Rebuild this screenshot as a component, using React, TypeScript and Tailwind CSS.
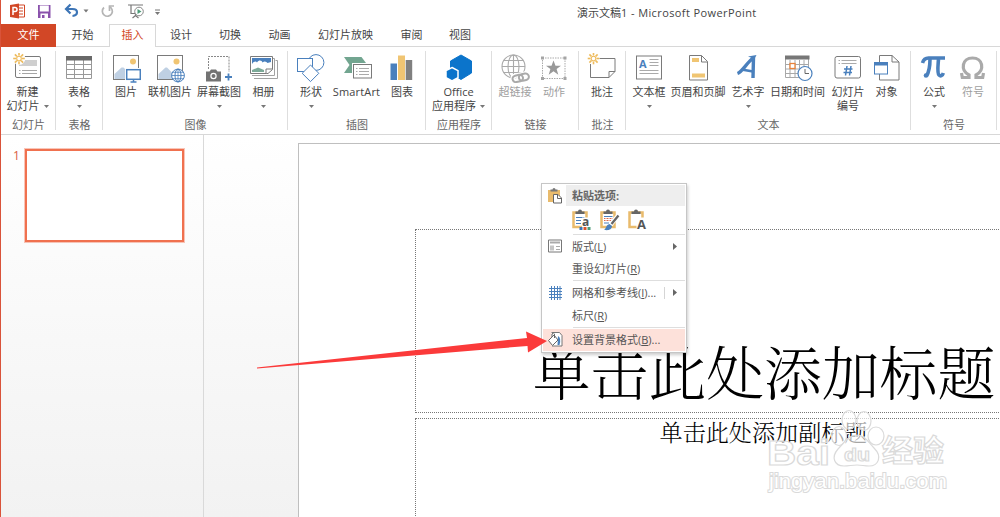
import type { ReactNode } from 'react'

const GRAY = '#7a7a7a'
const BLUE = '#4a80bd'
const YELLOW = '#f0c573'

const Sun = ({ x, y }: { x: number; y: number }) => (
  <g transform={`translate(${x} ${y})`} stroke="#eebb5c" strokeWidth="1.6" fill="#fff">
    {[0, 45, 90, 135, 180, 225, 270, 315].map((a) => (
      <path key={a} d="M0 -3v-2.8" transform={`rotate(${a})`} />
    ))}
    <circle r="2.3" strokeWidth="1.1" />
  </g>
)

const Icon = ({ children }: { children: ReactNode }) => (
  <svg width="30" height="30" viewBox="0 0 30 30" fill="none" className="block shrink-0">
    {children}
  </svg>
)

const NewSlideIcon = () => (
  <Icon>
    <rect x="2.5" y="3.5" width="25" height="21" rx="1.5" stroke={GRAY} />
    <rect x="6" y="7" width="18" height="6" fill="#cfcfcf" />
    <path d="M6 17.5h1.5M9 17.5h15M6 20.5h1.5M9 20.5h15" stroke="#a5a5a5" />
    <circle cx="6" cy="5.5" r="6.3" fill="#fff" />
    <Sun x={6} y={5.5} />
  </Icon>
)

const TableIcon = () => (
  <Icon>
    <path d="M2.5 3.5h25v22h-25zM2.5 11.5h25M2.5 16.5h25M2.5 21.5h25M10.5 6v19M19.5 6v19" stroke="#999" />
    <rect x="2" y="3" width="26" height="4.5" fill="#686868" />
  </Icon>
)

const PictureIcon = () => (
  <Icon>
    <rect x="2.5" y="2.5" width="25" height="24" stroke={GRAY} />
    <path d="M3.5 26v-5l7-6.5h2l3 3V26z" fill="#bfd0e3" />
    <circle cx="22" cy="8.5" r="3" fill={YELLOW} />
    <rect x="14" y="15" width="16" height="15" fill="#fff" />
    <rect x="15.7" y="16.7" width="13.6" height="9.6" stroke={BLUE} strokeWidth="1.5" />
    <path d="M22.5 26v2.5M19.5 29h6" stroke={BLUE} strokeWidth="1.5" />
  </Icon>
)

const OnlinePictureIcon = () => (
  <Icon>
    <rect x="2.5" y="2.5" width="25" height="24" stroke={GRAY} />
    <path d="M3.5 26v-5l7-6.5H12l6 6V26z" fill="#bfd0e3" />
    <circle cx="21.5" cy="8.5" r="3" fill={YELLOW} />
    <circle cx="23" cy="22.500" r="6.4" fill="#fff" stroke={BLUE} />
    <ellipse cx="23" cy="22.500" rx="3" ry="6.4" stroke={BLUE} />
    <path d="M16.6 22.500h12.8M23 16v13M17.5 19.3h11M17.5 25.7h11" stroke={BLUE} strokeWidth=".8" />
  </Icon>
)

const ScreenshotIcon = () => (
  <Icon>
    <path d="M4.5 16V3.5H25V19" stroke="#888" strokeDasharray="2 1" />
    <path d="M2 18.5h3.5l1.5-2h5l1.5 2H17v10H2z" fill="#737373" />
    <circle cx="9.5" cy="23" r="2.6" stroke="#fff" strokeWidth="1.2" />
    <path d="M24.5 20.5v7M21 24h7" stroke={BLUE} strokeWidth="1.8" />
  </Icon>
)

const AlbumIcon = () => (
  <Icon>
    <path d="M5 25.5h23.500V7.5h-2M3 22.500h22.500V5.5h-2" stroke="#a3a3a3" />
    <path d="M1.5 3.5h22v13l-4.5 4H1.5z" fill="#fff" stroke={GRAY} />
    <path d="M3 5h19v8H3z" fill={BLUE} />
    <path d="M3 11c2-3 4-3 5-1.5 2-3 5-2 5.5 0 2-2 4-1 5 .5l3.5-1v5H3z" fill="#fff" />
    <path d="M3 19v-2l6-2.5 6 2.5v2z" fill="#7caa98" />
    <path d="M17 20.5V16h6" fill="#fff" stroke={GRAY} />
  </Icon>
)

const ShapesIcon = () => (
  <Icon>
    <circle cx="20" cy="9.5" r="7.9" stroke={BLUE} />
    <rect x="1.5" y="5.5" width="15" height="13" fill="#fff" stroke={BLUE} />
    <path d="M14.5 12l8.3 8.3-8.3 8.3-8.3-8.3z" fill="#fff" stroke={BLUE} />
  </Icon>
)

const SmartArtIcon = () => (
  <Icon>
    <path d="M2 4h17.500l6 8-6 8H2l5.5-8z" fill="#72a590" />
    <rect x="10" y="10" width="20" height="17" fill="#fff" />
    <rect x="11.5" y="11.5" width="18" height="13.5" stroke={GRAY} />
    <path d="M14 15.5h1.5M17 15.5h10M14 18.5h1.5M17 18.5h10M14 21.5h1.5M17 21.5h10" stroke="#aaa" />
  </Icon>
)

const ChartIcon = () => (
  <Icon>
    <path d="M3.5 10.5H10V27H3.5z" fill={BLUE} />
    <path d="M11 2.5h7V27h-7z" fill={YELLOW} />
    <path d="M18.700 7h6.5v20h-6.5z" fill="#808080" />
  </Icon>
)

const OfficeIcon = () => (
  <Icon>
    <path d="M17 2l10.5 6v12L17 26.5 6.5 20V8z" fill="#0b74cb" stroke="#0b74cb" strokeLinejoin="round" />
    <path d="M8 14.500l6 3.200v7L8 28l-6-3.300v-7z" fill="#0b74cb" stroke="#fff" strokeWidth="1.5" />
  </Icon>
)

const HyperlinkIcon = () => (
  <Icon>
    <g stroke="#aaa" strokeWidth="1.1">
      <circle cx="13.5" cy="13.5" r="11.5" />
      <ellipse cx="13.5" cy="13.5" rx="5.5" ry="11.5" />
      <path d="M13.5 2v23M2 13.5h23M3.5 7.5h20M3.5 19.5h20" />
    </g>
    <g transform="rotate(-12 21 25)">
      <rect x="12.5" y="21.5" width="10.5" height="6.5" rx="3.2" stroke="#fff" strokeWidth="4.5" />
      <rect x="19" y="21.5" width="10.5" height="6.5" rx="3.2" stroke="#fff" strokeWidth="4.5" />
      <rect x="12.5" y="21.5" width="10.5" height="6.5" rx="3.2" stroke="#aaa" strokeWidth="2" />
      <rect x="19" y="21.5" width="10" height="6.5" rx="3.2" stroke="#aaa" strokeWidth="2" />
    </g>
  </Icon>
)

const ActionIcon = () => (
  <Icon>
    <rect x="3.5" y="5" width="22.5" height="20.5" stroke="#aaa" strokeDasharray="1.5 1" />
    <path d="M2 3.5h3v3H2zM24.5 3.5h3v3h-3zM2 24h3v3H2zM24.5 24h3v3h-3z" fill="#a5a5a5" />
    <path d="M14.5 7.5l2 5.2H22l-4.400 3.400 1.700 5.600-4.800-3.400-4.800 3.400 1.700-5.600L7 12.700h5.5z" fill="#999" />
  </Icon>
)

const CommentIcon = () => (
  <Icon>
    <path d="M3.5 11v13.5H22l6-6v-13H12.500" stroke={GRAY} />
    <path d="M22 24.5v-6h6" stroke={GRAY} />
    <Sun x={6.5} y={5.5} />
  </Icon>
)

const TextBoxIcon = () => (
  <Icon>
    <rect x="2.5" y="3" width="25" height="23" stroke={GRAY} />
    <text x="5" y="15" fontSize="11" fontWeight="700" fontFamily="Open Sans, sans-serif" fill={BLUE}>A</text>
    <path d="M15.5 6.5h9M15.5 9.5h9M15.5 12.5h9M5.5 17.500h19M5.5 20.500h19" stroke="#aaa" />
  </Icon>
)

const HeaderFooterIcon = () => (
  <Icon>
    <path d="M6.500 2.5h12l6 6V27h-18z" stroke={GRAY} />
    <path d="M18.500 2.5V9h6" stroke={GRAY} />
    <path d="M9 5h7v4H9zM9 20.5h13v4H9z" fill={YELLOW} />
  </Icon>
)

const WordArtIcon = () => (
  <Icon>
    <path d="M4.500 20.500C9 19 14 9.500 20.500 4.500L20 25" stroke={BLUE} strokeWidth="3.400" strokeLinejoin="bevel" />
    <path d="M8.500 16.500l11.5 2" stroke={BLUE} strokeWidth="2.6" />
    <path d="M15 3.500L23.500 2l-2 4z" fill={BLUE} />
  </Icon>
)

const DateTimeIcon = () => (
  <Icon>
    <path d="M2.5 3.5h23v21h-23zM2.5 11.5h23M2.5 16h23M2.5 20.500h23M7 7v17M12 7v17M16.500 7v17M21 7v17" stroke="#a8a8a8" />
    <rect x="2" y="2.5" width="24.5" height="4" fill="#777" />
    <rect x="7" y="10.5" width="5" height="5" fill="#fff" stroke="#e8833a" strokeWidth="1.3" />
    <circle cx="22" cy="20.500" r="7" fill="#fff" stroke={BLUE} strokeWidth="1.2" />
    <path d="M22 16v4.500h4" stroke="#666" />
  </Icon>
)

const SlideNumberIcon = () => (
  <Icon>
    <rect x="2" y="3.5" width="25.5" height="21.5" rx="2" stroke={GRAY} />
    <path d="M5.5 7.5H7M8.5 7.5h15M5.5 10.5H7M8.5 10.5h15" stroke="#aaa" />
    <path d="M14 13l-1.5 9.500M18 13l-1.5 9.500M11 16h8.5M10.5 19.5H19" stroke={BLUE} strokeWidth="1.5" />
  </Icon>
)

const ObjectIcon = () => (
  <Icon>
    <path d="M7.5 2.5H20L27 9v18H7.5z" stroke={GRAY} />
    <path d="M20 2.5V9h7" stroke={GRAY} />
    <rect x="2.5" y="9.5" width="13" height="11.5" fill="#fff" stroke={BLUE} />
    <rect x="2" y="9" width="14" height="3.5" fill={BLUE} />
  </Icon>
)

const PiIcon = () => (
  <Icon>
    <path d="M3.500 10C4.500 6.500 6 5 9.500 5H26" stroke={BLUE} strokeWidth="3.600" />
    <path d="M11 6c0 8-1 13-3.500 17M19.5 6c-.5 7-1.500 14 .5 16 1.5 1.500 3.500 1 4.300-2" stroke={BLUE} strokeWidth="3.600" />
    <circle cx="7" cy="22.500" r="2.300" fill={BLUE} />
  </Icon>
)

const OmegaIcon = () => (
  <Icon>
    <path d="M3.500 20l.8 4.500h6.700V22C2 17 4 5 14.500 5S27 17 18 22v2.500h6.700l.8-4.500" stroke="#aaa" strokeWidth="3.200" />
  </Icon>
)

interface Item {
  icon: ReactNode
  width: string
  lines: string[]
  arrow?: boolean
  disabled?: boolean
}

interface Group {
  name: string
  width: string
  items: Item[]
}

const groups: Group[] = [
  {
    name: '幻灯片',
    width: 'w-[55px]',
    items: [{ icon: <NewSlideIcon />, width: 'w-[53px]', lines: ['新建', '幻灯片'], arrow: true }],
  },
  {
    name: '表格',
    width: 'w-[47px]',
    items: [{ icon: <TableIcon />, width: 'w-[46px]', lines: ['表格'], arrow: true }],
  },
  {
    name: '图像',
    width: 'w-[185px] pl-[5px]',
    items: [
      { icon: <PictureIcon />, width: 'w-[36px]', lines: ['图片'] },
      { icon: <OnlinePictureIcon />, width: 'w-[52px]', lines: ['联机图片'] },
      { icon: <ScreenshotIcon />, width: 'w-[46px]', lines: ['屏幕截图'], arrow: true },
      { icon: <AlbumIcon />, width: 'w-[43px]', lines: ['相册'], arrow: true },
    ],
  },
  {
    name: '插图',
    width: 'w-[138px]',
    items: [
      { icon: <ShapesIcon />, width: 'w-[46px]', lines: ['形状'], arrow: true },
      { icon: <SmartArtIcon />, width: 'w-[45px] tracking-[0.15px]', lines: ['SmartArt'] },
      { icon: <ChartIcon />, width: 'w-[46px]', lines: ['图表'] },
    ],
  },
  {
    name: '应用程序',
    width: 'w-[66px]',
    items: [{ icon: <OfficeIcon />, width: 'w-[65px]', lines: ['Office', '应用程序'], arrow: true }],
  },
  {
    name: '链接',
    width: 'w-[87px] pl-[3px]',
    items: [
      { icon: <HyperlinkIcon />, width: 'w-[40px]', lines: ['超链接'], disabled: true },
      { icon: <ActionIcon />, width: 'w-[38px]', lines: ['动作'], disabled: true },
    ],
  },
  {
    name: '批注',
    width: 'w-[47px]',
    items: [{ icon: <CommentIcon />, width: 'w-[46px]', lines: ['批注'] }],
  },
  {
    name: '文本',
    width: 'w-[285px] pl-[3px]',
    items: [
      { icon: <TextBoxIcon />, width: 'w-[40px]', lines: ['文本框'], arrow: true },
      { icon: <HeaderFooterIcon />, width: 'w-[58px]', lines: ['页眉和页脚'] },
      { icon: <WordArtIcon />, width: 'w-[42px]', lines: ['艺术字'], arrow: true },
      { icon: <DateTimeIcon />, width: 'w-[57px]', lines: ['日期和时间'] },
      { icon: <SlideNumberIcon />, width: 'w-[44px]', lines: ['幻灯片', '编号'] },
      { icon: <ObjectIcon />, width: 'w-[33px]', lines: ['对象'] },
    ],
  },
  {
    name: '符号',
    width: 'w-[86px] pl-[3px]',
    items: [
      { icon: <PiIcon />, width: 'w-[40px]', lines: ['公式'], arrow: true },
      { icon: <OmegaIcon />, width: 'w-[38px]', lines: ['符号'], disabled: true },
    ],
  },
]

const tabs = [
  { name: '文件', cls: 'w-[55px] bg-[#d24726] text-white' },
  { name: '开始', cls: 'w-[53px]' },
  { name: '插入', cls: 'w-[47px] border border-b-0 border-[#d8d8d8] bg-white pb-[2px] text-[#d24726]' },
  { name: '设计', cls: 'w-[50px]' },
  { name: '切换', cls: 'w-[48px]' },
  { name: '动画', cls: 'w-[51px]' },
  { name: '幻灯片放映', cls: 'w-[81px]' },
  { name: '审阅', cls: 'w-[51px]' },
  { name: '视图', cls: 'w-[46px]' },
]

const Caret = () => (
  <svg width="5" height="3" viewBox="0 0 5 3" className="block shrink-0">
    <path d="M0 0h5L2.500 3z" fill="#777" />
  </svg>
)

const RibbonItem = ({ item }: { item: Item }) => {
  const single = item.lines.length === 1
  return (
    <div className={`${item.width} flex shrink-0 flex-col items-center whitespace-nowrap ${item.disabled ? 'text-[#a0a0a0]' : 'text-[#444]'}`}>
      {item.icon}
      <div className="mt-[2px] h-[14px] leading-[14px]">{item.lines[0]}</div>
      <div className="flex h-[14px] items-center gap-1 leading-[14px]">
        {!single && <span>{item.lines[1]}</span>}
        {item.arrow && <Caret />}
      </div>
    </div>
  )
}

const TitleBar = () => (
  <div className="relative flex h-[24px] shrink-0 items-center">
    <svg width="170" height="24" viewBox="0 0 170 24" fill="none" className="block">
      <path d="M15 5h8.500v12H15z" fill="#fff" stroke="#d24726" />
      <path d="M18 8h4M18 11h4M18 14h4" stroke="#d24726" />
      <path d="M9 5l9-1.500v15L9 17z" fill="#d24726" />
      <path d="M12 15V7.500h2q2 0 2 2t-2 2h-2" stroke="#fff" strokeWidth="1.500" />
      <path d="M37 5h12.500v13H37z" fill="#8a52ac" />
      <path d="M38.800 5.500h9v6h-9z" fill="#fff" />
      <path d="M39.500 13.500h7.500v4.500h-7.500z" fill="#fff" />
      <path d="M41 15h2.500v3H41z" fill="#8a52ac" />
      <path d="M65 9h6.500c6 0 6 6.500 0 7" stroke="#3d75b6" strokeWidth="2.200" />
      <path d="M69.500 4.500L65 9l4.500 4.500" stroke="#3d75b6" strokeWidth="2.200" />
      <path d="M82.500 9.500h5L85 12.500z" fill="#777" />
      <path d="M108 6.500a5 5 0 1 1-5 1" stroke="#b5b5b5" strokeWidth="1.700" />
      <path d="M108.500 11V6h4.500" stroke="#b5b5b5" strokeWidth="1.700" />
      <path d="M127 5h15M130 5v8.500h5M134.500 13.500v3M131.500 18l3-2.500 3 2.500" stroke="#777" strokeWidth="1.200" />
      <circle cx="138" cy="11.500" r="4.300" fill="#fff" stroke="#888" />
      <path d="M136.500 9l4 2.500-4 2.500z" fill="#4b9b78" />
      <path d="M154 10h5" stroke="#777" />
      <path d="M154 12h5l-2.500 3z" fill="#777" />
    </svg>
    <div className="ml-[406px] whitespace-nowrap text-[11px] leading-none text-[#444]">
      演示文稿<span className="tracking-[0.4px]">1 - Microsoft PowerPoint</span>
    </div>
  </div>
)

const Ribbon = () => (
  <div className="flex h-[89px] shrink-0 border-y border-[#d8d8d8] bg-white">
    {groups.map((g) => (
      <div key={g.name} className={`${g.width} relative flex shrink-0 flex-col pt-[6px]`}>
        <div className="flex h-[60px]">
          {g.items.map((item) => (
            <RibbonItem key={item.lines.join('')} item={item} />
          ))}
        </div>
        <div className="absolute inset-x-0 bottom-[2px] text-center leading-[14px] text-[#666]">{g.name}</div>
        <div className="absolute right-0 top-[4px] h-[79px] w-px bg-[#dedede]" />
      </div>
    ))}
  </div>
)

const Clipboard = ({ kind }: { kind: 'theme' | 'source' | 'text' }) => (
  <svg width="22" height="22" viewBox="0 0 22 22" fill="none" className="overflow-visible">
    <path d="M2.500 3.500h13v14.500h-13z" fill="#fff" stroke="#e9bb6c" strokeWidth="2.500" />
    <path d="M4.500 5V2.500H7Q7 .5 9 .5t2 2h2.500V5z" fill="#666" />
    {kind === 'theme' && (
      <>
        <path d="M5 8.500h8.500M5 11.500h5M5 14.500h5" stroke={BLUE} />
        <path d="M11 8.500h9V22h-9z" fill="#fff" />
        <text x="11" y="17" fontSize="12" fontWeight="700" fontFamily="Open Sans, sans-serif" fill="#555">a</text>
        <path d="M8.500 18h3v3h-3z" fill="#3c73b5" />
        <path d="M12.500 18h3v3h-3z" fill="#d9532c" />
        <path d="M16.500 18h3v3h-3z" fill="#4d9a78" />
      </>
    )}
    {kind === 'source' && (
      <>
        <path d="M5 7.500h8.500M5 14h5" stroke={BLUE} />
        <path d="M5 9.500h8.500M5 11.500h8" stroke="#dc6a4a" strokeDasharray="1 .5" />
        <path d="M19.500 6.500l-8 9" stroke="#fff" strokeWidth="4.500" />
        <path d="M19.500 6.500l-7 8.500" stroke="#666" strokeWidth="2.300" />
        <path d="M5 20.500c2 0 2-5 5.500-5.500l2.500 2c0 4-5 5-8 3.500z" fill={BLUE} />
      </>
    )}
    {kind === 'text' && (
      <>
        <path d="M9.500 8.500H20V20H9.500z" fill="#fff" />
        <text x="10" y="19.500" fontSize="13" fontWeight="700" fontFamily="Open Sans, sans-serif" fill="#555">A</text>
      </>
    )}
  </svg>
)

const MenuRow = ({ label, hotkey, tail = '', icon, arrow, split, cls }: {
  label: string
  hotkey: string
  tail?: string
  icon?: ReactNode
  arrow?: boolean
  split?: boolean
  cls: string
}) => (
  <div className={`${cls} mx-px flex shrink-0 items-center`}>
    <div className="flex w-[29px] pl-1">{icon}</div>
    <div className="flex-1 whitespace-nowrap leading-none">
      {label}(<span className="underline">{hotkey}</span>){tail}
    </div>
    {split && <div className="mr-[8px] h-[12px] w-px bg-[#d5d5d5]" />}
    {arrow && (
      <svg width="4" height="7" viewBox="0 0 4 7" className="mr-[8px]">
        <path d="M0 0l4 3.500L0 7z" fill="#666" />
      </svg>
    )}
  </div>
)

const Divider = () => <div className="ml-[31px] mr-px h-px shrink-0 bg-[#dedede]" />

const ContextMenu = () => (
  <div className="absolute left-[540px] top-[183px] flex h-[170px] w-[146px] flex-col border border-[#c6c6c6] bg-white pt-px text-[11px] text-[#555] shadow-[1px_2px_3px_rgba(0,0,0,0.2)]">
    <div className="mr-px flex h-[21px] shrink-0">
      <div className="w-[24px] pl-[5px] pt-[2px]">
        <svg width="16" height="17" viewBox="0 0 16 17" fill="none">
          <path d="M1 3h12v12H1z" fill="#e9bb6c" />
          <path d="M3.500 4.500v-2h2q0-1.500 1.500-1.500t1.500 1.500h2v2z" fill="#777" />
          <path d="M6.500 7.500H11l3.500 3.500v5h-8z" fill="#fff" stroke="#666" />
          <path d="M10.500 7.500v4h4" stroke="#666" />
        </svg>
      </div>
      <div className="flex flex-1 items-center bg-[#eee] pl-[6px] font-bold leading-none text-[#666]">粘贴选项:</div>
    </div>
    <div className="flex h-[28px] shrink-0 items-center gap-[6px] pl-[29px]">
      <Clipboard kind="theme" />
      <Clipboard kind="source" />
      <Clipboard kind="text" />
    </div>
    <Divider />
    <MenuRow
      cls="h-[22px]"
      label="版式"
      hotkey="L"
      arrow
      icon={
        <svg width="16" height="14" viewBox="0 0 16 14" fill="none">
          <path d="M1.500 1h13v12h-13z" stroke="#777" />
          <path d="M3 3.500h10" stroke="#aaa" strokeWidth="2" />
          <path d="M3 6.500h4v5H3z" fill="#c5c5c5" />
          <path d="M9 7.500h4M9 10.500h4" stroke="#aaa" />
        </svg>
      }
    />
    <MenuRow cls="mb-px h-[22px]" label="重设幻灯片" hotkey="R" />
    <Divider />
    <MenuRow
      cls="h-[23px]"
      label="网格和参考线"
      hotkey="I"
      tail="..."
      arrow
      split
      icon={
        <svg width="16" height="14" viewBox="0 0 16 14">
          <path d="M2 2.500h13M2 5.500h13M2 8.500h13M2 11.500h13M4.500 0v14M7.500 0v14M10.500 0v14M13 0v14" stroke={BLUE} />
        </svg>
      }
    />
    <MenuRow cls="mb-px h-[22px]" label="标尺" hotkey="R" />
    <Divider />
    <MenuRow
      cls="mt-px h-[22px] bg-[#fde1da] pb-px"
      label="设置背景格式"
      hotkey="B"
      tail="..."
      icon={
        <svg width="17" height="17" viewBox="0 0 17 17" fill="none">
          <path d="M4.500 1.500h8l2.500 3V15H5" fill="#fff" stroke="#777" />
          <path d="M11 5q3.500 2 1.500 9h-2z" fill={BLUE} />
          <path d="M1.500 9.500L7 4l4 5-5.500 5.500z" fill="#fff" stroke="#666" />
          <path d="M5 6V3q1.500-2 2.500 0v4" stroke="#666" />
        </svg>
      }
    />
  </div>
)

const Arrow = () => (
  <svg width="294" height="44" viewBox="0 0 294 44" className="absolute left-[255px] top-[328px]">
    <path d="M1 39.500L271 10l-1-6.500 21 9.500-19 11.500-.5-6.500L1 40.500z" fill="#fb3a3a" />
  </svg>
)

const Watermark = () => (
  <svg width="190" height="92" viewBox="0 0 190 92" className="absolute left-[761px] top-[406px]" fill="#fff" fillOpacity=".65" stroke="#dadada" strokeWidth="1.200">
    <g fontFamily="Liberation Sans, sans-serif" fontWeight="700">
      <text x="5" y="58.500" fontSize="35" textLength="63" lengthAdjust="spacingAndGlyphs">Bai</text>
      <ellipse cx="77" cy="30" rx="7.500" ry="9.500" />
      <ellipse cx="87" cy="14" rx="7" ry="9.500" />
      <ellipse cx="102" cy="15" rx="7" ry="9.500" />
      <ellipse cx="114" cy="30" rx="8" ry="9" />
      <path d="M95 29c8 0 11 7 17 13 9 9 4 18-5 18-5 0-7-1-12-1s-8 1-13 1c-10 0-13-9-6-17 6-6 10-14 19-14z" />
      <text x="82" y="55" fontSize="19" textLength="26" lengthAdjust="spacingAndGlyphs">du</text>
      <text x="120" y="55" fontSize="30" fontFamily="Noto Sans CJK SC, sans-serif" textLength="62" lengthAdjust="spacingAndGlyphs">经验</text>
    </g>
    <text x="7" y="82" fontSize="21" fontFamily="Liberation Sans, sans-serif" textLength="178" lengthAdjust="spacingAndGlyphs" fillOpacity="1" strokeWidth="2" paintOrder="stroke">jingyan.baidu.com</text>
  </svg>
)

const App = () => {
  return (
    <div className="relative flex h-[517px] w-[1000px] flex-col overflow-hidden border-l border-[#d9533a] bg-white font-['Open_Sans','Noto_Sans_CJK_SC',sans-serif] text-[11px]">
      <TitleBar />
      <div className="flex h-[23px] shrink-0 text-[11px] text-[#444]">
        {tabs.map((tab) => (
          <div key={tab.name} className={`${tab.cls} relative z-10 flex shrink-0 items-center justify-center`}>
            {tab.name}
          </div>
        ))}
      </div>
      <div className="-mt-px">
        <Ribbon />
      </div>

      <div className="flex min-h-0 flex-1 bg-gradient-to-b from-white to-[#f2f2f2]">
        <div className="flex w-[203px] shrink-0 items-start border-r border-[#d9d9d9] pl-[12px] pt-[14px]">
          <span className="w-[12px] text-[12px] leading-[14px] text-[#d9603f]">1</span>
          <div className="h-[93px] w-[159px] border-[2.5px] border-[#f0714f] bg-white outline outline-[#f0714f]/40" />
        </div>
        <div className="min-w-0 flex-1 overflow-hidden pl-[94px] pt-[8px]">
          <div className="h-[500px] w-[932px] border border-[#bfbfbf] bg-white pl-[116px] pt-[85px]">
            <div className="flex h-[184px] w-[698px] items-end justify-center border border-dotted border-[#777] pb-[9px] text-[57.8px] leading-[66px] text-black">
              <span className="whitespace-nowrap font-['Noto_Serif_CJK_SC','Noto_Sans_CJK_SC',serif] font-light">单击此处添加标题</span>
            </div>
            <div className="mt-[5px] h-[200px] w-[698px] border border-dotted border-[#777] pr-px text-center font-['Noto_Serif_CJK_SC','Noto_Sans_CJK_SC',serif] text-[23.1px] font-light leading-[24px] text-black">
              单击此处添加副标题
            </div>
          </div>
        </div>
      </div>

      <ContextMenu />
      <Arrow />
      <Watermark />
    </div>
  )
}

export default App
